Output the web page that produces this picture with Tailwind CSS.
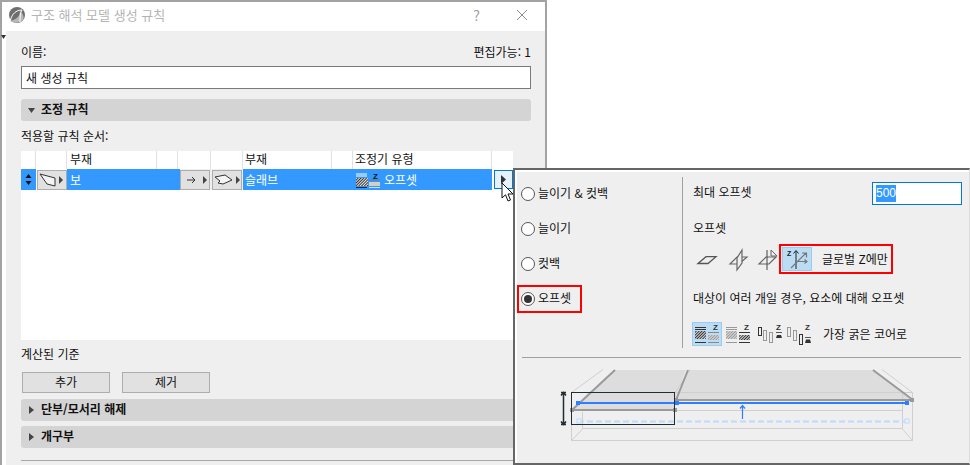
<!DOCTYPE html>
<html lang="ko">
<head>
    <meta charset="UTF-8">
    <title>구조 해석 모델 생성 규칙</title>
    <script src="https://cdn.jsdelivr.net/npm/@tailwindcss/browser@4"></script>
</head>
<body class="bg-white">
<div class="relative w-[970px] h-[465px] overflow-hidden bg-white text-[12px] leading-4 text-[#111] font-['Noto_Sans_CJK_KR','Liberation_Sans',sans-serif]">

    <!-- Dialogo principal -->
    <div class="w-[547px] h-[465px] flex flex-col border-t-2 border-l-2 border-r-2 border-[#a3a3a3] bg-white">
        <div class="h-[29px] flex items-center shrink-0 pl-[7px] pr-[17px] pb-[3px]">
            <svg width="16" height="16" viewBox="0 0 16 16" class="shrink-0">
                <circle cx="8" cy="8" r="8" fill="#6e6e6e"/>
                <path d="M1 14 C5 13 11 11 11 4 C13 6 16 9 14 13 C12 16 5 17 1 14 Z" fill="#b8b8b8"/>
                <path d="M1.5 13 C3 7 7 3 13 3 C11 6 11 10 11 15" fill="none" stroke="#fff" stroke-width="1"/>
            </svg>
            <span class="ml-[6px] text-[13px] text-[#b4b4b4]">구조 해석 모델 생성 규칙</span>
            <span class="ml-auto text-[14px] text-[#9a9a9a]">?</span>
            <svg width="12" height="12" viewBox="0 0 12 12" class="ml-[36px]"><path d="M1 1 L11 11 M11 1 L1 11" stroke="#8c8c8c" stroke-width="1"/></svg>
        </div>
        <div class="flex-1 flex min-h-0">
            <div class="w-[4px] shrink-0 pt-[4px]">
                <svg width="5" height="4" viewBox="0 0 5 4" class="-ml-px"><path d="M0 0 H5 L2.5 4 Z" fill="#333"/></svg>
            </div>
            <div class="flex-1 bg-[#efefef] pl-[15px] pr-[14px] flex flex-col">
                <div class="mt-[13px] -mb-px flex justify-between">
                    <span>이름:</span>
                    <span>편집가능: 1</span>
                </div>
                <div class="mt-[7px] h-[23px] shrink-0 bg-white border border-[#7a7a7a] flex items-center pl-[4px]">새 생성 규칙</div>

                <div class="mt-[10px] h-[22px] shrink-0 rounded-[3px] bg-[#d4d4d4] flex items-center pl-[7px] font-bold">
                    <svg width="7" height="5" viewBox="0 0 7 5"><path d="M0 0 H7 L3.5 5 Z" fill="#444"/></svg>
                    <span class="ml-[6px] -mt-[2px]">조정 규칙</span>
                </div>

                <div class="mt-[7px]">적용할 규칙 순서:</div>

                <div class="mt-[7px] w-[492px] h-[189px] shrink-0 bg-white">
                    <div class="h-[18px] grid grid-cols-[15px_31px_90px_21px_33px_32px_89px_21px_139px_21px] [&>div]:border-r [&>div]:border-[#e2e2e2]">
                        <div></div>
                        <div></div>
                        <div class="pl-[3px]">부재</div>
                        <div></div>
                        <div></div>
                        <div></div>
                        <div class="pl-[2px]">부재</div>
                        <div></div>
                        <div class="pl-[2px]">조정기 유형</div>
                        <div class="!border-r-0"></div>
                    </div>
                    <div class="h-[21px] grid grid-cols-[15px_31px_90px_21px_33px_32px_89px_21px_139px_21px] text-white">
                        <div class="bg-[#3399ff] flex items-center justify-center">
                            <svg width="7" height="11" viewBox="0 0 7 11"><path d="M3.5 0 L6.5 4 H0.5 Z M3.5 11 L0.5 7 H6.5 Z" fill="#111"/></svg>
                        </div>
                        <div class="flex items-center pl-px">
                            <div class="w-[30px] h-[20px] bg-[#e1e1e1] border border-[#adadad] flex items-center">
                                <svg width="28" height="18" viewBox="0 0 28 18">
                                    <path d="M2 3 L17 7 V15 L9 13 Z" fill="#f4f4f4" stroke="#333"/>
                                    <path d="M21 5 L25 9 L21 13 Z" fill="#444"/>
                                </svg>
                            </div>
                        </div>
                        <div class="col-span-2 bg-[#3399ff] flex items-center pl-[3px]">보</div>
                        <div class="flex items-center bg-[#efefef] border-l-2 border-[#3399ff]">
                            <div class="w-[30px] h-[20px] bg-[#e1e1e1] border border-[#adadad] flex items-center">
                                <svg width="28" height="18" viewBox="0 0 28 18">
                                    <path d="M6 9 H14 M11 6 L14 9 L11 12" fill="none" stroke="#333"/>
                                    <path d="M22 5 L26 9 L22 13 Z" fill="#444"/>
                                </svg>
                            </div>
                        </div>
                        <div class="flex items-center justify-center bg-[#efefef]">
                            <div class="w-[30px] h-[20px] bg-[#e1e1e1] border border-[#adadad] flex items-center">
                                <svg width="28" height="18" viewBox="0 0 28 18">
                                    <path d="M2 6 L12 4 L19 9 L10 13 L5 12 L7 10 Z" fill="#f4f4f4" stroke="#333"/>
                                    <path d="M23 5 L27 9 L23 13 Z" fill="#444"/>
                                </svg>
                            </div>
                        </div>
                        <div class="col-span-2 bg-[#3399ff] flex items-center pl-[2px]">슬래브</div>
                        <div class="bg-[#3399ff] flex items-center pl-[3px]">
                            <svg width="25" height="18" viewBox="0 0 25 18">
                                <defs>
                                    <pattern id="hatchRow" width="2" height="2" patternUnits="userSpaceOnUse" patternTransform="rotate(45)">
                                        <rect width="2" height="2" fill="#e8e8e8"/><rect width="1" height="2" fill="#333"/>
                                    </pattern>
                                </defs>
                                <path d="M0 3 H11 M0 5 H11" stroke="#fff" stroke-width="1"/>
                                <rect x="0" y="7" width="12" height="8" fill="url(#hatchRow)"/>
                                <path d="M0 16.5 H11" stroke="#222"/>
                                <path d="M13 9 H24" stroke="#777"/>
                                <rect x="13" y="11" width="11" height="4" fill="#cfcfcf"/>
                                <path d="M13 16.5 H24" stroke="#ddd"/>
                                <text x="17" y="8" font-size="8" font-weight="700" font-family="Liberation Sans" fill="#111">Z</text>
                            </svg>
                            <span class="ml-[3px]">오프셋</span>
                        </div>
                        <div class="bg-white flex items-center justify-end">
                            <div class="w-[19px] h-[19px] bg-[#e5f1fb] border border-[#0078d7] flex items-center pl-[6px]">
                                <svg width="5" height="9" viewBox="0 0 5 9"><path d="M0 0 L5 4.5 L0 9 Z" fill="#333"/></svg>
                            </div>
                        </div>
                    </div>
                </div>

                <div class="mt-[6px]">계산된 기준</div>
                <div class="mt-[10px] flex gap-[12px] pl-px">
                    <button class="w-[88px] h-[21px] bg-[#e1e1e1] border border-[#adadad] pb-[2px]">추가</button>
                    <button class="w-[88px] h-[21px] bg-[#e1e1e1] border border-[#adadad] pb-[2px]">제거</button>
                </div>

                <div class="mt-[6px] h-[22px] shrink-0 rounded-[3px] bg-[#d4d4d4] flex items-center pl-[8px] font-bold">
                    <svg width="5" height="8" viewBox="0 0 5 8"><path d="M0 0 L5 4 L0 8 Z" fill="#444"/></svg>
                    <span class="ml-[7px] -mt-[2px]">단부/모서리 해제</span>
                </div>
                <div class="mt-[5px] h-[22px] shrink-0 rounded-[3px] bg-[#d4d4d4] flex items-center pl-[8px] font-bold">
                    <svg width="5" height="8" viewBox="0 0 5 8"><path d="M0 0 L5 4 L0 8 Z" fill="#444"/></svg>
                    <span class="ml-[7px] -mt-[2px]">개구부</span>
                </div>
                <div class="mt-[12px] h-px bg-[#a8a8a8]"></div>
            </div>
        </div>
    </div>

    <!-- Popup de opciones -->
    <div class="absolute left-[513px] top-[168px] w-[457px] h-[297px] border-2 border-[#666] border-r-[#dcdcdc] border-r bg-white pt-[2px] pl-[2px]">
        <div class="h-full bg-[#efefef] flex flex-col">
            <div class="h-[185px] shrink-0 flex">
                <div class="w-[165px] shrink-0 pt-[4px]">
                    <label class="h-[35px] flex items-center pl-[4px]">
                        <span class="w-[14px] h-[14px] rounded-full border border-[#555] bg-white"></span>
                        <span class="ml-[3px] -mt-[2px]">늘이기 &amp; 컷백</span>
                    </label>
                    <label class="h-[35px] flex items-center pl-[4px]">
                        <span class="w-[14px] h-[14px] rounded-full border border-[#555] bg-white"></span>
                        <span class="ml-[3px] -mt-px">늘이기</span>
                    </label>
                    <label class="h-[35px] flex items-center pl-[4px]">
                        <span class="w-[14px] h-[14px] rounded-full border border-[#555] bg-white"></span>
                        <span class="ml-[3px] -mt-px">컷백</span>
                    </label>
                    <div class="h-[35px] flex items-center">
                        <label class="w-[65px] h-[28px] border-2 border-[#f00] flex items-center pl-[2px]">
                            <span class="w-[14px] h-[14px] rounded-full border border-[#555] bg-white flex items-center justify-center">
                                <span class="w-[8px] h-[8px] rounded-full bg-[#333]"></span>
                            </span>
                            <span class="ml-[3px] -mt-px">오프셋</span>
                        </label>
                    </div>
                </div>
                <div class="mt-[5px] h-[171px] w-px bg-[#a0a0a0] shrink-0"></div>
                <div class="w-[279px] pl-[10px]">
                    <div class="mt-[10px] h-[23px] flex items-center justify-between">
                        <span class="-mt-[3px]">최대 오프셋</span>
                        <div class="w-[90px] h-[23px] bg-white border border-[#0078d7] flex items-center pl-[3px]">
                            <span class="bg-[#3399ff] text-white leading-[17px] font-['Liberation_Sans',sans-serif]">500</span>
                        </div>
                    </div>
                    <div class="mt-[15px]">오프셋</div>
                    <div class="mt-[8px] h-[30px] flex">
                        <svg width="86" height="30" viewBox="693 244 86 30" class="shrink-0">
                            <path d="M698 263.5 L706 256.7 H716 L708 263.5 Z" fill="#eee" stroke="#555" stroke-width="1.3"/>
                            <path d="M730 264 L737 257 H747 L739 264 Z" fill="none" stroke="#666" stroke-width="1.2"/>
                            <path d="M737 270 V258 L742 250 V263 Z" fill="#eee" stroke="#666" stroke-width="1.2"/>
                            <path d="M759 264 L766 257 H776 L769 264 Z" fill="none" stroke="#666" stroke-width="1.2"/>
                            <path d="M767 250 V270" stroke="#444" stroke-width="1"/>
                            <path d="M771 250 L777 256 H771 Z" fill="none" stroke="#666" stroke-width="1"/>
                        </svg>
                        <div class="w-[114px] h-[30px] border-2 border-[#f00] flex items-center pl-px shrink-0">
                            <svg width="30" height="24" viewBox="0 0 30 24" class="shrink-0">
                                <rect x="0.5" y="0.5" width="29" height="23" fill="#bcdcf4" stroke="#99ccf0"/>
                                <text x="5" y="9" font-size="7" font-weight="700" font-family="Liberation Sans" fill="#222">Z</text>
                                <path d="M14 4 V22 M11.5 6.5 L14 3.5 L16.5 6.5" fill="none" stroke="#222" stroke-width="1"/>
                                <path d="M9 21 L24 6 M20 6 H24.5 V10.5" fill="none" stroke="#777" stroke-width="1.2"/>
                                <path d="M14 14.5 H25 M22.5 12.5 L25 14.5 L22.5 16.5" fill="none" stroke="#777" stroke-width="1.2"/>
                            </svg>
                            <span class="ml-[10px] whitespace-nowrap">글로벌 Z에만</span>
                        </div>
                    </div>
                    <div class="mt-[16px] whitespace-nowrap">대상이 여러 개일 경우, 요소에 대해 오프셋</div>
                    <div class="mt-[16px] h-[24px] flex items-center -ml-px">
                        <svg width="126" height="24" viewBox="692 322 126 24" class="shrink-0">
                            <defs>
                                <pattern id="hatchDark" width="2" height="2" patternUnits="userSpaceOnUse" patternTransform="rotate(45)">
                                    <rect width="2" height="2" fill="#ddd"/><rect width="1" height="2" fill="#333"/>
                                </pattern>
                                <pattern id="hatchGray" width="2" height="2" patternUnits="userSpaceOnUse" patternTransform="rotate(45)">
                                    <rect width="2" height="2" fill="#ddd"/><rect width="1" height="2" fill="#999"/>
                                </pattern>
                            </defs>
                            <rect x="692.5" y="322.5" width="29" height="23" fill="#bcdcf4" stroke="#99ccf0"/>
                            <path d="M695 327.5 H706 M695 329.5 H706 M695 342.5 H706" stroke="#333"/>
                            <rect x="695" y="331" width="11" height="8" fill="url(#hatchDark)"/>
                            <path d="M708 332.5 H719 M708 342.5 H719" stroke="#888"/>
                            <rect x="708" y="335" width="11" height="5" fill="url(#hatchGray)"/>
                            <text x="713" y="330" font-size="8" font-weight="700" font-family="Liberation Sans" fill="#333">Z</text>

                            <path d="M726 327.5 H737 M726 329.5 H737 M726 342.5 H737" stroke="#999"/>
                            <rect x="726" y="331" width="11" height="8" fill="url(#hatchGray)"/>
                            <path d="M739 332.5 H750 M739 342.5 H750" stroke="#333"/>
                            <rect x="739" y="335" width="11" height="5" fill="url(#hatchDark)"/>
                            <text x="744" y="330" font-size="8" font-weight="700" font-family="Liberation Sans" fill="#333">Z</text>

                            <rect x="758.5" y="327.5" width="3" height="8" fill="none" stroke="#333"/>
                            <rect x="763.5" y="330.5" width="3" height="10" fill="none" stroke="#999"/>
                            <rect x="769.5" y="332.5" width="3" height="10" fill="none" stroke="#999"/>
                            <text x="776" y="330" font-size="8" font-weight="700" font-family="Liberation Sans" fill="#333">Z</text>
                            <path d="M776 332.5 H782" stroke="#555"/>
                            <path d="M777 335 H781 L782 338 H776 Z" fill="#333"/>

                            <rect x="787.5" y="327.5" width="3" height="9" fill="none" stroke="#999"/>
                            <rect x="793.5" y="330.5" width="3" height="10" fill="none" stroke="#999"/>
                            <rect x="799.5" y="334.5" width="3" height="10" fill="none" stroke="#333"/>
                            <text x="805" y="330" font-size="8" font-weight="700" font-family="Liberation Sans" fill="#333">Z</text>
                            <path d="M805 337.5 H811" stroke="#555"/>
                            <path d="M806 339.5 H810 L811 343 H805 Z" fill="#333"/>
                        </svg>
                        <span class="ml-[5px] whitespace-nowrap">가장 굵은 코어로</span>
                    </div>
                </div>
            </div>
            <div class="ml-[5px] w-[439px] h-px bg-[#a0a0a0] shrink-0"></div>
            <svg width="451" height="105" viewBox="517 358 451 105" class="block shrink-0">
                <path d="M615 370 H686 L675 399 V410 H571 Z" fill="#dddddd"/>
                <path d="M688 370 H873 L913 400 H676 Z" fill="#dddddd"/>
                <g fill="none" stroke="#cfcfcf" stroke-width="1">
                    <path d="M571.5 392.5 L603 369.5 M571.5 440.5 L583 428.5 M912.5 440.5 L902 428.5 M912.5 392.5 L882 369.5 M675.5 392.5 L690 369.5"/>
                    <path d="M675 392.5 H912.5 V440.5 H571.5 V392.5"/>
                    <path d="M582.5 428.5 H902.5 V392 M582.5 428.5 V412 M675 410.5 H902"/>
                </g>
                <g fill="none" stroke="#9a9a9a" stroke-width="2">
                    <path d="M615 370 L572 410 H676"/>
                    <path d="M688 370 L676 400 H914"/>
                    <path d="M873 370 L913 400"/>
                </g>
                <rect x="570" y="408" width="4" height="4" fill="#999"/>
                <rect x="673" y="408" width="4" height="4" fill="#999"/>
                <rect x="674" y="398" width="4" height="4" fill="#999"/>
                <rect x="910" y="398" width="4" height="4" fill="#999"/>
                <path d="M578 421.5 H907" stroke="#bcdcff" stroke-width="2" stroke-dasharray="6 3"/>
                <rect x="577" y="419" width="4" height="4" fill="#f0f0f0" stroke="#bcdcff"/>
                <rect x="905" y="419" width="4" height="4" fill="#f0f0f0" stroke="#bcdcff"/>
                <path d="M578 403 H907" stroke="#2e7fff" stroke-width="2"/>
                <rect x="576" y="401" width="4" height="4" fill="#2e7fff"/>
                <rect x="675" y="401" width="4" height="4" fill="#2e7fff"/>
                <rect x="905" y="401" width="4" height="4" fill="#2e7fff"/>
                <path d="M742.5 406 V419 M740 408.5 L742.5 405.5 L745 408.5" fill="none" stroke="#2e7fff" stroke-width="1.2"/>
                <rect x="571.5" y="392.5" width="103" height="32" fill="none" stroke="#222c33"/>
                <path d="M563.5 393 V424 M561 395.5 L563.5 392.5 L566 395.5 M561 421.5 L563.5 424.5 L566 421.5 M561 392.5 H566 M561 424.5 H566" fill="none" stroke="#222c33" stroke-width="1.5"/>
            </svg>
        </div>
    </div>

    <!-- Cursor -->
    <svg class="absolute left-[501px] top-[182px] z-20" width="14" height="21" viewBox="0 0 14 21">
        <path d="M1 1 V16 L4.5 12.8 L7 19 L9.5 18 L7 12 H12 Z" fill="#fff" stroke="#111" stroke-width="1"/>
    </svg>
</div>
</body>
</html>
